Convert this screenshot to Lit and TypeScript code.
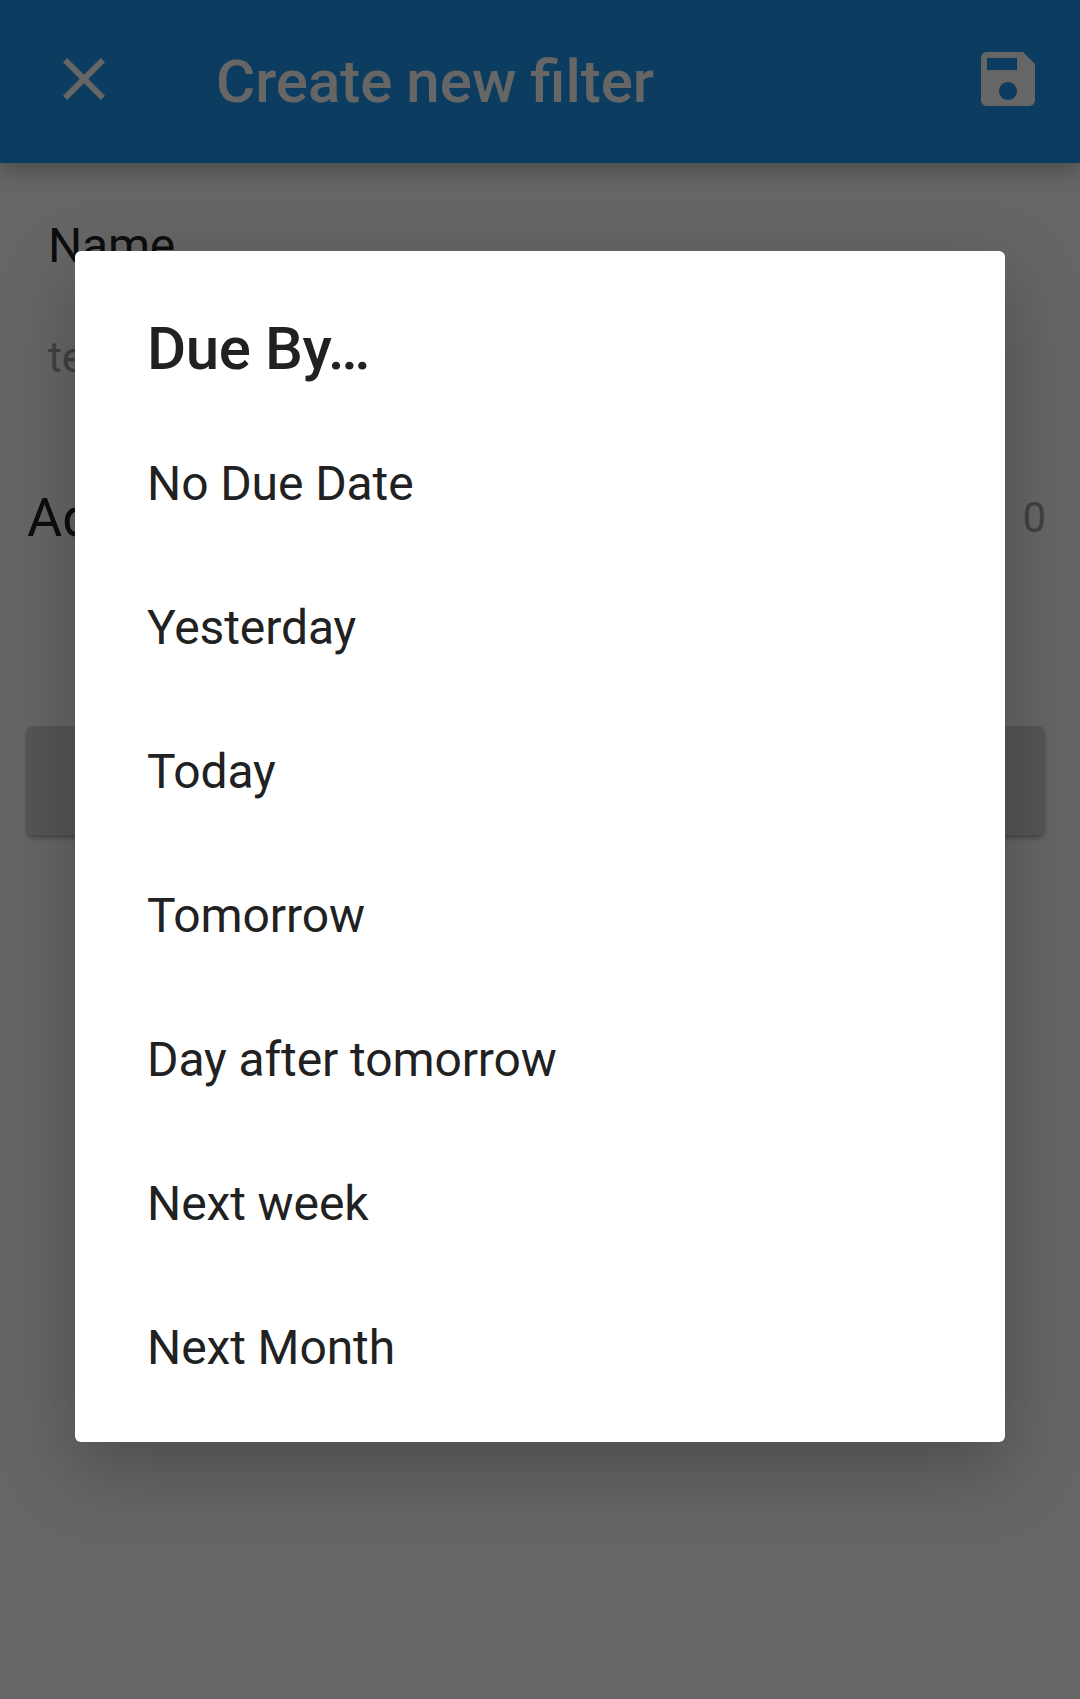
import { LitElement, html, css } from "lit";
import { customElement, property } from "lit/decorators.js";

const options = [
  "No Due Date",
  "Yesterday",
  "Today",
  "Tomorrow",
  "Day after tomorrow",
  "Next week",
  "Next Month",
];

const icons: Record<string, string> = {
  close:
    "M19 6.41L17.59 5 12 10.59 6.41 5 5 6.41 10.59 12 5 17.59 6.41 19 12 13.41 17.59 19 19 17.59 13.41 12z",
  save: "M17 3H5c-1.11 0-2 .9-2 2v14c0 1.1.89 2 2 2h14c1.1 0 2-.9 2-2V7l-4-4zm-5 16c-1.66 0-3-1.34-3-3s1.34-3 3-3 3 1.34 3 3-1.34 3-3 3zm3-10H5V5h10v4z",
};

@customElement("app-icon")
export class AppIcon extends LitElement {
  @property() name = "close";
  static styles = css`
    :host { display: block; width: 72px; height: 72px; }
    .glyph { display: block; width: 100%; height: 100%; fill: currentColor; }
  `;
  render() {
    return html`<svg class="glyph" viewBox="0 0 24 24"><path d=${icons[this.name]}></path></svg>`;
  }
}

@customElement("due-dialog")
export class DueDialog extends LitElement {
  static styles = css`
    :host {
      display: block;
      box-sizing: border-box;
      width: 930px;
      height: 1191px;
      padding: 60px 72px 0;
      border-radius: 6px;
      background: #fff;
      color: #212121;
      box-shadow: 0 26px 76px rgba(0, 0, 0, 0.26);
    }
    .title { margin: 0; font-size: 60px; font-weight: 500; line-height: 75px; letter-spacing: -0.4px; }
    .list { list-style: none; margin: 26px 0 0; padding: 0; }
    .item { font-size: 48px; line-height: 144px; letter-spacing: -0.1px; }
  `;
  render() {
    return html`
      <h2 class="title">Due By…</h2>
      <ul class="list">
        ${options.map((o) => html`<li class="item">${o}</li>`)}
      </ul>
    `;
  }
}

@customElement("app-root")
export class AppRoot extends LitElement {
  static styles = css`
    :host {
      display: block;
      position: relative;
      width: 1080px;
      height: 1699px;
      overflow: hidden;
      background: #fff;
      font-family: Roboto, "Liberation Sans", sans-serif;
    }
    .bar {
      display: flex;
      align-items: center;
      box-sizing: border-box;
      height: 163px;
      padding: 0 36px 0 48px;
      background: #1e96ee;
      color: #fff;
      box-shadow: 0 9px 20px rgba(0, 0, 0, 0.24);
    }
    .bar app-icon { margin-bottom: 5px; }
    .heading {
      flex: 1;
      margin: 0 0 0 96px;
      font-size: 60px;
      font-weight: 500;
      line-height: 72px;
      word-spacing: -1px;
    }
    .form { display: flex; flex-direction: column; padding: 54px 36px 0 27px; }
    .label { padding-left: 21px; font-size: 48px; line-height: 58px; letter-spacing: -0.2px; color: #212121; }
    .field { padding-left: 21px; margin-top: 58px; font-size: 42px; line-height: 50px; color: #a3a3a3; }
    .row { display: flex; justify-content: space-between; align-items: center; margin-top: 102px; height: 64px; }
    .add { font-size: 54px; color: #212121; }
    .count { margin-right: -2px; font-size: 42px; color: #a3a3a3; }
    .button {
      height: 109px;
      margin-top: 177px;
      border-radius: 6px;
      background: #d6d7d7;
      box-shadow: 0 3px 5px rgba(0, 0, 0, 0.32);
    }
    .scrim {
      position: absolute;
      inset: 0;
      display: flex;
      justify-content: center;
      align-items: flex-start;
      padding-top: 251px;
      background: rgba(0, 0, 0, 0.6);
    }
  `;
  render() {
    return html`
      <header class="bar">
        <app-icon name="close"></app-icon>
        <h1 class="heading">Create new filter</h1>
        <app-icon name="save"></app-icon>
      </header>
      <main class="form">
        <div class="label">Name</div>
        <div class="field">te</div>
        <div class="row"><span class="add">Ad</span><span class="count">0</span></div>
        <div class="button"></div>
      </main>
      <div class="scrim"><due-dialog></due-dialog></div>
    `;
  }
}
